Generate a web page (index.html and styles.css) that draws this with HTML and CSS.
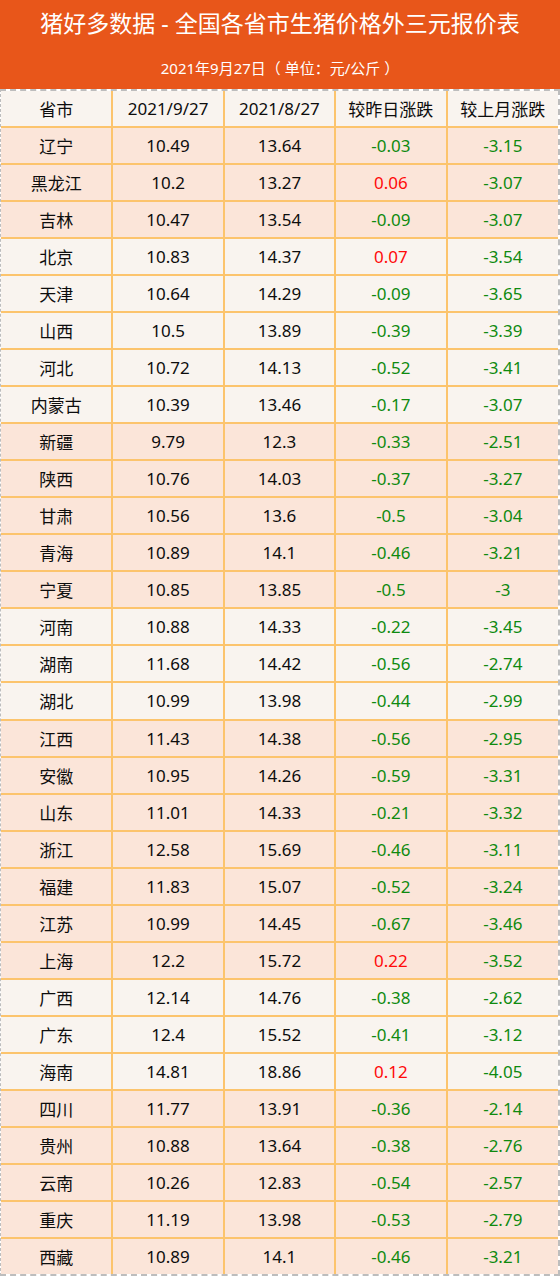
FILE: index.html
```html
<!DOCTYPE html>
<html lang="zh-CN">
<head>
<meta charset="utf-8">
<title>猪好多数据</title>
<link rel="stylesheet" href="styles.css">
</head>
<body>
<div class="page">
  <header class="banner">
    <h1 class="title">猪好多数据 - 全国各省市生猪价格外三元报价表</h1>
    <p class="subtitle">2021年9月27日（ 单位：元/公斤 ）</p>
  </header>
  <div class="frame">
    <table class="prices">
      <thead>
        <tr class="light"><th>省市</th><th>2021/9/27</th><th>2021/8/27</th><th>较昨日涨跌</th><th>较上月涨跌</th></tr>
      </thead>
      <tbody>
        <tr class="peach"><td>辽宁</td><td>10.49</td><td>13.64</td><td class="dn">-0.03</td><td class="dn">-3.15</td></tr>
        <tr class="peach"><td>黑龙江</td><td>10.2</td><td>13.27</td><td class="up">0.06</td><td class="dn">-3.07</td></tr>
        <tr class="peach"><td>吉林</td><td>10.47</td><td>13.54</td><td class="dn">-0.09</td><td class="dn">-3.07</td></tr>
        <tr class="light"><td>北京</td><td>10.83</td><td>14.37</td><td class="up">0.07</td><td class="dn">-3.54</td></tr>
        <tr class="light"><td>天津</td><td>10.64</td><td>14.29</td><td class="dn">-0.09</td><td class="dn">-3.65</td></tr>
        <tr class="light"><td>山西</td><td>10.5</td><td>13.89</td><td class="dn">-0.39</td><td class="dn">-3.39</td></tr>
        <tr class="light"><td>河北</td><td>10.72</td><td>14.13</td><td class="dn">-0.52</td><td class="dn">-3.41</td></tr>
        <tr class="light"><td>内蒙古</td><td>10.39</td><td>13.46</td><td class="dn">-0.17</td><td class="dn">-3.07</td></tr>
        <tr class="peach"><td>新疆</td><td>9.79</td><td>12.3</td><td class="dn">-0.33</td><td class="dn">-2.51</td></tr>
        <tr class="peach"><td>陕西</td><td>10.76</td><td>14.03</td><td class="dn">-0.37</td><td class="dn">-3.27</td></tr>
        <tr class="peach"><td>甘肃</td><td>10.56</td><td>13.6</td><td class="dn">-0.5</td><td class="dn">-3.04</td></tr>
        <tr class="peach"><td>青海</td><td>10.89</td><td>14.1</td><td class="dn">-0.46</td><td class="dn">-3.21</td></tr>
        <tr class="peach"><td>宁夏</td><td>10.85</td><td>13.85</td><td class="dn">-0.5</td><td class="dn">-3</td></tr>
        <tr class="light"><td>河南</td><td>10.88</td><td>14.33</td><td class="dn">-0.22</td><td class="dn">-3.45</td></tr>
        <tr class="light"><td>湖南</td><td>11.68</td><td>14.42</td><td class="dn">-0.56</td><td class="dn">-2.74</td></tr>
        <tr class="light"><td>湖北</td><td>10.99</td><td>13.98</td><td class="dn">-0.44</td><td class="dn">-2.99</td></tr>
        <tr class="peach"><td>江西</td><td>11.43</td><td>14.38</td><td class="dn">-0.56</td><td class="dn">-2.95</td></tr>
        <tr class="peach"><td>安徽</td><td>10.95</td><td>14.26</td><td class="dn">-0.59</td><td class="dn">-3.31</td></tr>
        <tr class="peach"><td>山东</td><td>11.01</td><td>14.33</td><td class="dn">-0.21</td><td class="dn">-3.32</td></tr>
        <tr class="peach"><td>浙江</td><td>12.58</td><td>15.69</td><td class="dn">-0.46</td><td class="dn">-3.11</td></tr>
        <tr class="peach"><td>福建</td><td>11.83</td><td>15.07</td><td class="dn">-0.52</td><td class="dn">-3.24</td></tr>
        <tr class="peach"><td>江苏</td><td>10.99</td><td>14.45</td><td class="dn">-0.67</td><td class="dn">-3.46</td></tr>
        <tr class="peach"><td>上海</td><td>12.2</td><td>15.72</td><td class="up">0.22</td><td class="dn">-3.52</td></tr>
        <tr class="light"><td>广西</td><td>12.14</td><td>14.76</td><td class="dn">-0.38</td><td class="dn">-2.62</td></tr>
        <tr class="light"><td>广东</td><td>12.4</td><td>15.52</td><td class="dn">-0.41</td><td class="dn">-3.12</td></tr>
        <tr class="light"><td>海南</td><td>14.81</td><td>18.86</td><td class="up">0.12</td><td class="dn">-4.05</td></tr>
        <tr class="peach"><td>四川</td><td>11.77</td><td>13.91</td><td class="dn">-0.36</td><td class="dn">-2.14</td></tr>
        <tr class="peach"><td>贵州</td><td>10.88</td><td>13.64</td><td class="dn">-0.38</td><td class="dn">-2.76</td></tr>
        <tr class="peach"><td>云南</td><td>10.26</td><td>12.83</td><td class="dn">-0.54</td><td class="dn">-2.57</td></tr>
        <tr class="peach"><td>重庆</td><td>11.19</td><td>13.98</td><td class="dn">-0.53</td><td class="dn">-2.79</td></tr>
        <tr class="peach"><td>西藏</td><td>10.89</td><td>14.1</td><td class="dn">-0.46</td><td class="dn">-3.21</td></tr>
      </tbody>
    </table>
  </div>
</div>
</body>
</html>
```

FILE: styles.css
```css
html, body {
  margin: 0;
  padding: 0;
  background: #ffffff;
}
body {
  font-family: "Noto Sans", "Noto Sans CJK SC", sans-serif;
  color: #0d0d0d;
}
.page {
  width: 560px;
}
.banner {
  background: #e8561a;
  height: 89px;
  display: flex;
  flex-direction: column;
  align-items: center;
  color: #ffffff;
}
.title {
  margin: 6px 0 0;
  font-size: 23px;
  font-weight: 400;
  line-height: 34px;
}
.subtitle {
  margin: 17px 0 0;
  font-size: 15px;
  line-height: 22px;
}
.frame {
  border: 2px dashed #bdbdbd;
  border-left-width: 1px;
  height: 1187px;
  box-sizing: border-box;
}
.prices {
  width: 100%;
  height: 100%;
  border-collapse: collapse;
  border-style: hidden;
  table-layout: fixed;
}
.prices th,
.prices td {
  border: 2px solid #fcc46d;
  text-align: center;
  vertical-align: middle;
  font-size: 17px;
  font-weight: 400;
  padding: 0;
  height: 35px;
}
.light {
  background: #f9f4ef;
}
.peach {
  background: #fbe5d9;
}
.dn {
  color: #0f8a0f;
}
.up {
  color: #ff0a0a;
}
```
